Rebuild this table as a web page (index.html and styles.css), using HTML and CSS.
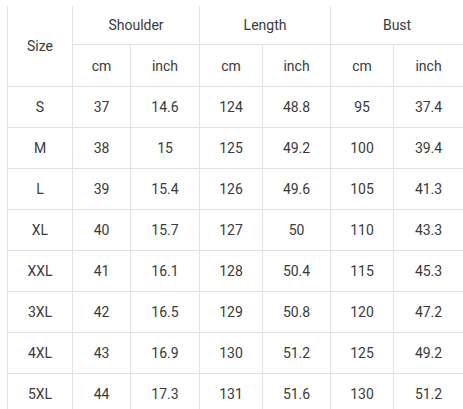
FILE: index.html
```html
<!DOCTYPE html>
<html>
<head>
<meta charset="utf-8">
<link rel="stylesheet" href="styles.css">
</head>
<body>
<table class="size-table">
  <colgroup>
    <col class="c-size"><col class="c1"><col class="c2"><col class="c3"><col class="c4"><col class="c5"><col class="c6">
  </colgroup>
  <thead>
    <tr class="head1">
      <th rowspan="2">Size</th>
      <th colspan="2">Shoulder</th>
      <th colspan="2">Length</th>
      <th colspan="2">Bust</th>
    </tr>
    <tr class="head2">
      <th>cm</th><th>inch</th><th>cm</th><th>inch</th><th>cm</th><th>inch</th>
    </tr>
  </thead>
  <tbody>
    <tr><td>S</td><td>37</td><td>14.6</td><td>124</td><td>48.8</td><td>95</td><td>37.4</td></tr>
    <tr><td>M</td><td>38</td><td>15</td><td>125</td><td>49.2</td><td>100</td><td>39.4</td></tr>
    <tr><td>L</td><td>39</td><td>15.4</td><td>126</td><td>49.6</td><td>105</td><td>41.3</td></tr>
    <tr><td>XL</td><td>40</td><td>15.7</td><td>127</td><td>50</td><td>110</td><td>43.3</td></tr>
    <tr><td>XXL</td><td>41</td><td>16.1</td><td>128</td><td>50.4</td><td>115</td><td>45.3</td></tr>
    <tr><td>3XL</td><td>42</td><td>16.5</td><td>129</td><td>50.8</td><td>120</td><td>47.2</td></tr>
    <tr><td>4XL</td><td>43</td><td>16.9</td><td>130</td><td>51.2</td><td>125</td><td>49.2</td></tr>
    <tr><td>5XL</td><td>44</td><td>17.3</td><td>131</td><td>51.6</td><td>130</td><td>51.2</td></tr>
  </tbody>
</table>
</body>
</html>
```

FILE: styles.css
```css
html, body {
  margin: 0;
  padding: 0;
  background: #ffffff;
  overflow: hidden;
}
body {
  padding: 6px 0 0 7px;
  font-family: Roboto, "Liberation Sans", sans-serif;
  font-size: 14px;
  color: #3a3a3a;
}
.size-table {
  border-collapse: collapse;
  table-layout: fixed;
  width: 456px;
}
.c-size { width: 65px; }
.c1 { width: 58px; }
.c2 { width: 69px; }
.c3 { width: 63px; }
.c4 { width: 68px; }
.c5 { width: 63px; }
.c6 { width: 70px; }
.size-table th,
.size-table td {
  border: 1px solid #e3e3e3;
  text-align: center;
  font-weight: 400;
  padding: 0;
}
.head1 th { border-top: none; height: 38px; }
.head2 th { height: 41px; }
.size-table td { height: 40px; }
```
